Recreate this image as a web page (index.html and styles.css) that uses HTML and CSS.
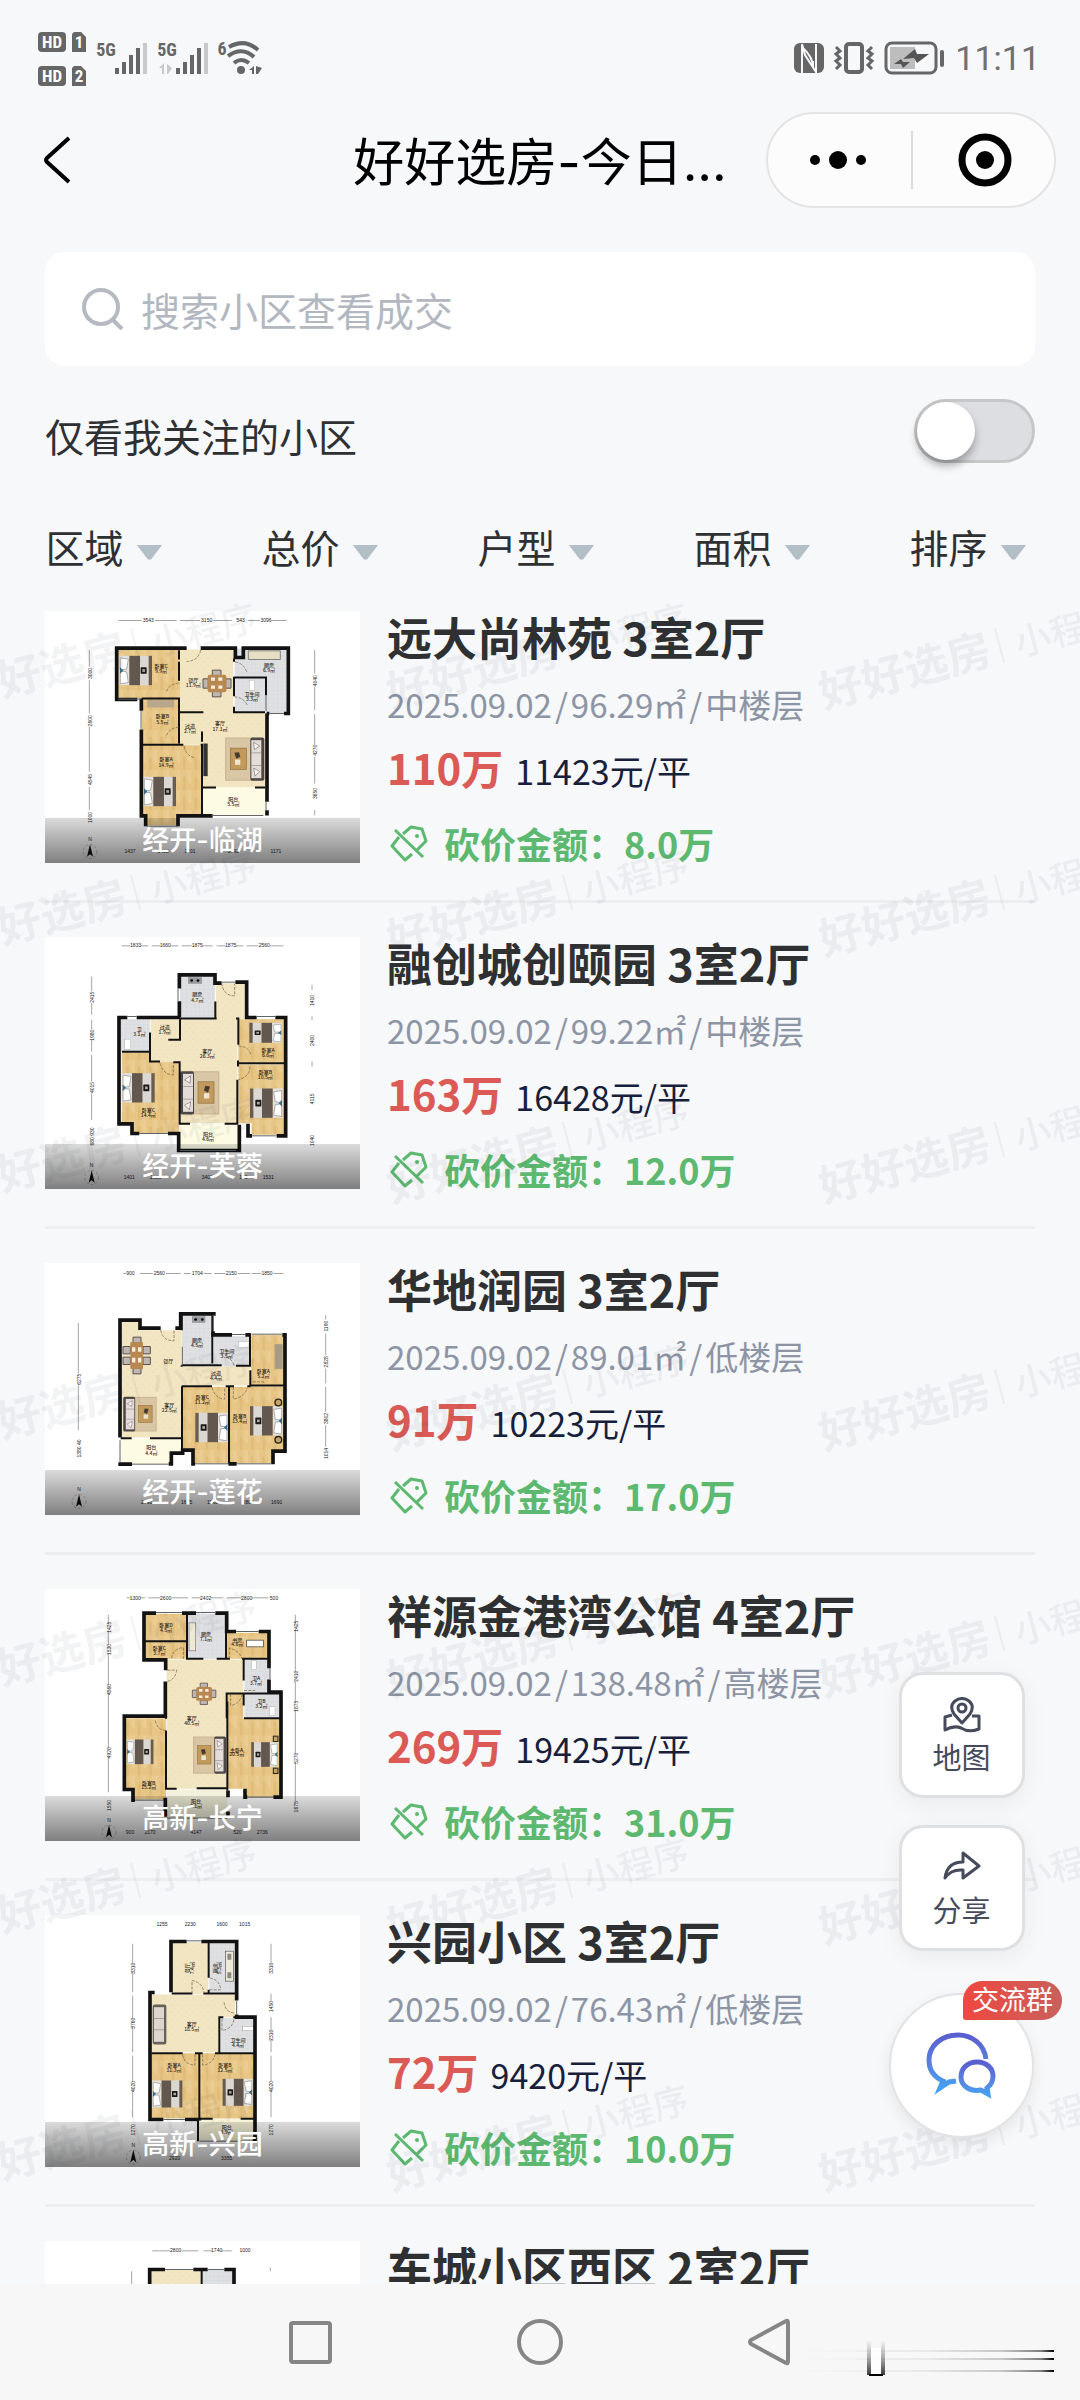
FILE: index.html
```html
<!DOCTYPE html>
<html lang="zh-CN">
<head>
<meta charset="utf-8">
<meta name="viewport" content="width=device-width, initial-scale=1">
<title>好好选房-今日成交</title>
<link rel="stylesheet" href="styles.css">
</head>
<body>
<!-- shared artwork for icons and floor plans -->
<svg class="defs" width="0" height="0" aria-hidden="true">
  <defs>
    <pattern id="wood" width="34" height="60" patternUnits="userSpaceOnUse">
      <rect width="34" height="60" fill="#e6c585"/>
      <rect x="0" width="9" height="38" fill="#ebcd93"/><rect x="17" y="20" width="8" height="40" fill="#e0bc78"/>
      <rect x="26" y="0" width="8" height="30" fill="#e9ca8e"/>
    </pattern>
    <pattern id="stone" width="22" height="22" patternUnits="userSpaceOnUse">
      <rect width="22" height="22" fill="#f2e5c2"/><path d="M4 6h5M14 16h4" stroke="#eddcb2" stroke-width="3"/>
    </pattern>
    <pattern id="tile" width="13" height="13" patternUnits="userSpaceOnUse">
      <rect width="13" height="13" fill="#dfe0e2"/><path d="M0 0H13M0 0V13" stroke="#d6d7da" stroke-width="2"/>
    </pattern>
    <g id="bed">
      <rect width="30" height="88" fill="#e4e3e0"/><path d="M3 6L27 10L22 40L3 42ZM3 46L22 48L27 80L3 84Z" fill="#fff" stroke="#8b8a88" stroke-width="2"/>
      <path d="M2 34L12 44L2 54" fill="#3b6b86"/>
      <rect x="30" width="32" height="88" fill="#62584f"/><rect x="62" width="28" height="88" fill="#dbd7d3"/><rect x="88" width="10" height="88" fill="#6b5c50"/>
      <rect x="64" y="34" width="18" height="20" rx="2" fill="#1c1a19"/><rect x="69" y="40" width="8" height="8" fill="#b3aca6"/>
    </g>
    <g id="lounge">
      <rect width="88" height="130" fill="#cdb893"/><rect x="4" y="4" width="80" height="122" fill="#d8c6a5"/>
      <rect x="16" y="32" width="48" height="64" fill="#c19a5c" stroke="#8d6d3c" stroke-width="2"/>
      <path d="M28 46L42 44L46 58L34 64Z" fill="#443a33"/><rect x="30" y="66" width="16" height="16" fill="#eee4d2"/>
      <rect x="76" y="0" width="42" height="130" rx="6" fill="#4e4844"/><rect x="79" y="8" width="30" height="114" fill="#e4dcd8"/>
      <path d="M79 46H108M79 84H108" stroke="#8f8682" stroke-width="2"/><path d="M86 14L104 26L88 36ZM86 92L104 102L90 116Z" fill="#f8f5f3" stroke="#7a6f6b" stroke-width="2"/>
    </g>
    <g id="dining">
      <path d="M28 0H54V16H28ZM28 64H54V80H28ZM0 26H16V54H0ZM68 26H84V54H68Z" fill="#bdb6b1" stroke="#5d534c" stroke-width="3"/>
      <rect x="14" y="14" width="56" height="52" rx="6" fill="#b98750"/><path d="M24 22h12v10h-12zM46 22h12v10h-12zM24 46h12v10h-12zM46 46h12v10h-12z" fill="#f5eddf"/>
    </g>
    <g id="dining-long">
      <path d="M30 0H54V18H30ZM30 92H54V110H30ZM0 28H22V50H0ZM0 60H22V82H0ZM60 28H82V50H60ZM60 60H82V82H60Z" fill="#bdb6b1" stroke="#5d534c" stroke-width="3"/>
      <rect x="22" y="15" width="38" height="80" fill="#b98750"/><path d="M27 30h10v14h-10zM45 30h10v14h-10zM27 62h10v14h-10zM45 62h10v14h-10z" fill="#f5eddf"/>
    </g>
    <g id="north">
      <circle r="21" fill="none" stroke="#555" stroke-width="1" stroke-dasharray="8 6"/>
      <path d="M0 -22L9 16L0 8L-9 16Z" fill="#111"/><text class="dim" x="0" y="-32">N</text>
    </g>
    <symbol id="cut-tag" viewBox="0 0 38 37">
      <g fill="none" stroke="currentColor" stroke-width="3" stroke-linejoin="round">
        <path d="M13 9L21 2L32 4L36 16L27 25"/><path d="M9 12L2 21L15 35L22 29"/><path d="M5 5L33 32"/>
      </g>
      <circle cx="27" cy="11" r="2" fill="currentColor"/>
    </symbol>
    <linearGradient id="chat-fill" x1="0" y1="0" x2="0" y2="1">
      <stop offset="0" stop-color="#5a5fd0"/><stop offset=".6" stop-color="#5b84dc"/><stop offset="1" stop-color="#45a0f4"/>
    </linearGradient>
    <linearGradient id="fade-x"><stop offset="0" stop-color="#000" stop-opacity="0"/><stop offset=".5" stop-color="#000" stop-opacity=".06"/><stop offset=".8" stop-color="#000" stop-opacity=".2"/><stop offset=".95" stop-color="#000" stop-opacity=".5"/><stop offset="1" stop-color="#000"/></linearGradient>
    <linearGradient id="fade-y" x2="0" y2="1"><stop offset="0" stop-color="#000" stop-opacity="0"/><stop offset=".5" stop-color="#000" stop-opacity=".3"/><stop offset="1" stop-color="#000" stop-opacity=".75"/></linearGradient>
  </defs>
</svg>

<div class="app">
  <div class="status">
    <svg class="status-left" width="226" height="56" viewBox="0 0 226 56" role="img" aria-label="信号与网络">
      <g fill="#666">
        <rect x="0" y="2" width="28" height="20" rx="4"/><rect x="0" y="36" width="28" height="20" rx="4"/>
        <path d="M36 2H43L48 7V22H34V4ZM36 36H43L48 41V56H34V38Z"/>
        <rect x="77" y="38" width="4" height="6"/><rect x="84" y="32" width="4" height="12"/><rect x="91" y="25" width="4" height="19"/><rect x="98" y="18" width="4" height="26"/>
        <rect x="138" y="38" width="4" height="6"/><rect x="145" y="32" width="4" height="12"/><rect x="152" y="25" width="4" height="19"/><rect x="159" y="18" width="4" height="26"/>
        <circle cx="203" cy="40" r="4"/>
        <path d="M211 40L216 36V44H214V40ZM218 36L224 38L220 44H218Z"/>
      </g>
      <g fill="#c9c9ca"><rect x="105" y="13" width="4" height="31"/><rect x="166" y="13" width="4" height="31"/><path d="M121 38L126 33V44H124V38ZM129 34L134 38L130 44H129Z"/></g>
      <g fill="none" stroke="#666" stroke-width="4"><path d="M191 17Q207 8 220 20"/><path d="M190 26Q204 16 216 27"/><path d="M196 33Q203 27 211 33"/></g>
      <g class="status-mini">
        <text class="status-badge" x="14" y="18">HD</text><text class="status-badge" x="14" y="52">HD</text>
        <text class="status-badge" x="41" y="18">1</text><text class="status-badge" x="41" y="52">2</text>
        <text x="68" y="26">5G</text><text x="129" y="26">5G</text><text x="184" y="25">6</text>
      </g>
    </svg>
    <div class="status-right">
      <svg width="152" height="34" viewBox="0 0 152 34" role="img" aria-label="NFC 振动 充电">
        <rect x="1" y="2" width="30" height="30" rx="6" fill="#666"/>
        <path d="M9 32V6Q20 16 20 26V20M9 3L12 14L23 31V3" fill="none" stroke="#f7f8fa" stroke-width="2"/>
        <rect x="53" y="3" width="16" height="28" rx="3" fill="none" stroke="#666" stroke-width="4"/>
        <path d="M43 6L47 10L43 13L47 17L43 20L47 24L43 28M79 6L75 10L79 13L75 17L79 20L75 24L79 28" fill="none" stroke="#666" stroke-width="3"/>
        <rect x="93" y="2" width="50" height="30" rx="6" fill="none" stroke="#666" stroke-width="3"/>
        <rect x="97" y="6" width="25" height="22" fill="#bdbdbe"/>
        <path d="M110 18L122 8L124 13H136L124 22L121 17ZM101 23L108 18L110 21H117L110 27L108 23Z" fill="#555"/>
        <rect x="147" y="9" width="4" height="17" rx="2" fill="#666"/>
      </svg>
      <time class="clock">11:11</time>
    </div>
  </div>

  <header class="titlebar">
    <button class="back" aria-label="返回">
      <svg width="28" height="48" viewBox="0 0 28 48"><path d="M25 2L3 22Q1 24 3 26L25 46" fill="none" stroke="#000" stroke-width="4"/></svg>
    </button>
    <h1 class="page-title">好好选房-今日...</h1>
    <div class="capsule">
      <button class="capsule-btn capsule-more" aria-label="更多">
        <svg width="58" height="20" viewBox="0 0 58 20"><circle cx="6" cy="10" r="5"/><circle cx="29" cy="10" r="9"/><circle cx="52" cy="10" r="5"/></svg>
      </button>
      <button class="capsule-btn capsule-close" aria-label="关闭">
        <svg width="54" height="54" viewBox="0 0 54 54"><circle cx="27" cy="27" r="23" fill="none" stroke="#000" stroke-width="7"/><circle cx="27" cy="27" r="9"/></svg>
      </button>
    </div>
  </header>

  <label class="search">
    <svg width="42" height="42" viewBox="0 0 42 42" aria-hidden="true"><circle cx="19" cy="19" r="17" fill="none" stroke="#b5b9c1" stroke-width="4"/><path d="M30 31L40 41" stroke="#b5b9c1" stroke-width="4"/></svg>
    <input type="search" placeholder="搜索小区查看成交" aria-label="搜索小区查看成交">
  </label>

  <div class="follow">
    <label for="only-followed">仅看我关注的小区</label>
    <input class="switch" id="only-followed" type="checkbox" role="switch">
  </div>

  <nav class="filters" aria-label="筛选">
    <button aria-haspopup="listbox">区域</button>
    <button aria-haspopup="listbox">总价</button>
    <button aria-haspopup="listbox">户型</button>
    <button aria-haspopup="listbox">面积</button>
    <button aria-haspopup="listbox">排序</button>
  </nav>

  <main class="results">
    <ul class="list">
      <li class="item">
        <figure class="plan">
          <svg viewBox="45 63 945 755" aria-hidden="true">
            <rect x="260" y="175" width="190" height="150" fill="url(#wood)"/><rect x="335" y="325" width="112" height="140" fill="url(#wood)"/><path d="M335 465H515V675H445V705H345V675H335Z" fill="url(#wood)"/>
            <rect x="450" y="178" width="160" height="190" fill="url(#stone)"/><rect x="450" y="366" width="255" height="98" fill="url(#stone)"/><rect x="517" y="450" width="190" height="142" fill="url(#stone)"/>
            <path d="M614 175H775V370H705V365H614Z" fill="url(#tile)"/><rect x="518" y="592" width="190" height="84" fill="#fdfbe4"/>
            <use href="#bed" x="268" y="197"/><use href="#bed" x="340" y="560"/><use href="#dining" x="519" y="240"/><use href="#lounge" x="585" y="442"/>
            <rect x="520" y="460" width="13" height="98" fill="#333"/><rect x="352" y="328" width="80" height="24" fill="#b8a78b"/><path d="M655 182h96v26h-96z" fill="#e6dfc6" stroke="#555" stroke-width="2"/><rect x="658" y="270" width="16" height="30" fill="#fff" stroke="#999"/>
            <path class="wall" d="M470 174H260V328H322M334 325V362M334 418V677H352M347 672V708M444 708V677H548M512 174H616V202H640V174H775V370H762M711 370V635M711 660V676M718 370H710"/>
            <path class="wall thin" d="M447 180V208M447 215V272M447 325V460M335 325H450M335 464H460M512 464H516V590M516 455V424M447 366H520M612 205V215M612 260V262H708V315M612 265V318M612 350V366H705M518 592H558M675 592H706M516 590V675"/>
            <path class="window" d="M265 327H332M333 362V416M350 708H444M545 676H700M708 315V362M718 370H762M708 635V662"/>
            <path class="door" d="M512 180Q505 212 470 214M447 278Q412 285 410 305M650 245Q640 218 614 215M447 410Q412 416 408 442M462 468Q470 500 495 502M652 345Q640 322 614 320"/>
            <path class="ruler" d="M265 91H335M375 91H440M450 91H510M550 91H605M655 91H690M725 91H770M178 180V230M178 270V370M178 410V545M178 590V660M854 180V250M854 290V360M854 372V465M854 500V580M854 660V675"/>
            <text class="dim" x="355" y="96">3543</text><text class="dim" x="530" y="96">3150</text><text class="dim" x="708" y="96">3096</text><text class="dim" x="632" y="96">543</text>
            <text class="dim" x="300" y="790">1437</text><text class="dim" x="400" y="790">3420</text><text class="dim" x="480" y="790">1201</text><text class="dim" x="610" y="790">3093</text><text class="dim" x="738" y="790">1171</text>
            <g class="dims-v"><text transform="translate(186 250)rotate(-90)">3000</text><text transform="translate(186 392)rotate(-90)">2600</text><text transform="translate(186 568)rotate(-90)">4545</text><text transform="translate(186 682)rotate(-90)">1000</text><text transform="translate(861 272)rotate(-90)">4040</text><text transform="translate(861 480)rotate(-90)">4270</text><text transform="translate(861 610)rotate(-90)">3650</text></g>
            <text class="room" x="393" y="234">卧室C</text><text class="room" x="393" y="250">9.9㎡</text><text class="room" x="490" y="275">餐厅</text><text class="room" x="490" y="292">11.9㎡</text><text class="room" x="717" y="231">厨房</text><text class="room" x="717" y="247">6.9㎡</text><text class="room" x="666" y="318">卫生间</text><text class="room" x="666" y="334">3.3㎡</text><text class="room" x="397" y="385">卧室B</text><text class="room" x="397" y="401">5.5㎡</text><text class="room" x="480" y="413">过道</text><text class="room" x="480" y="428">2.7㎡</text><text class="room" x="570" y="406">客厅</text><text class="room" x="570" y="423">17.1㎡</text><text class="room" x="408" y="514">卧室A</text><text class="room" x="408" y="530">14.9㎡</text><text class="room" x="610" y="632">阳台</text><text class="room" x="610" y="648">5.5㎡</text>
            <use href="#north" x="180" y="784"/>
          </svg>
          <figcaption>经开-临湖</figcaption>
        </figure>
        <div class="info">
          <h2>远大尚林苑 3室2厅</h2>
          <p class="meta"><span>2025.09.02</span><i>/</i><span>96.29㎡</span><i>/</i><span>中楼层</span></p>
          <p class="price"><strong>110万</strong><span>11423元/平</span></p>
          <p class="cut"><svg width="38" height="37"><use href="#cut-tag"/></svg><span>砍价金额：8.0万</span></p>
        </div>
      </li>

      <li class="item">
        <figure class="plan">
          <svg viewBox="45 52 945 755" aria-hidden="true">
            <path d="M275 398H360V425H447V640H305V608H275Z" fill="url(#wood)"/><rect x="625" y="298" width="140" height="130" fill="url(#wood)"/><path d="M625 434H765V645H665V610H625Z" fill="url(#wood)"/>
            <path d="M362 298H558V190H645V298H622V610H450V424H362Z" fill="url(#stone)"/><rect x="450" y="168" width="105" height="126" fill="url(#tile)"/><rect x="272" y="298" width="88" height="98" fill="url(#tile)"/><rect x="448" y="612" width="178" height="80" fill="#fdfbe4"/>
            <use href="#bed" x="276" y="460"/><use href="#bed" transform="translate(758 506)scale(-1 1)"/><use href="#bed" transform="translate(756 309)scale(-1 .68)"/><use href="#lounge" transform="translate(568 454)scale(-1 1)"/>
            <rect x="474" y="172" width="42" height="20" fill="#999b9e"/><circle cx="485" cy="182" r="4"/><circle cx="504" cy="182" r="4"/><rect x="284" y="358" width="18" height="30" fill="#fff" stroke="#999"/>
            <path class="wall" d="M448 206V165H555V190H575M448 244V293M616 187H650V293H680M736 293H767V648H740M666 648H654V612M292 293H267V612H306V641H328M320 293H450M414 641H446V692H628V615"/>
            <path class="wall thin" d="M450 296H556V245M558 296H560M618 296H625V375M622 430H766M624 422V440M622 480V612H584M450 298V360H415M360 338V425H390M276 396H360M430 427H449V612H480"/>
            <path class="window" d="M444 206V244M575 187H616M680 290H736M290 290H320M328 641H414M666 648H740M450 692H618"/>
            <path class="door" d="M575 190Q580 228 614 228V192M625 378Q660 382 662 405M660 440Q660 470 625 480M390 430Q400 465 430 465V430"/>
            <path class="ruler" d="M275 78H300M332 78H355M365 78H390M422 78H445M455 78H485M518 78H548M560 78H585M618 78H640M650 78H685M720 78H760M185 170V215M185 250V285M185 300V330M185 360V395M185 405V485M185 520V600M846 195V210M846 290V300M846 425V440"/>
            <text class="dim" x="317" y="83">1833</text><text class="dim" x="406" y="83">1660</text><text class="dim" x="502" y="83">1875</text><text class="dim" x="602" y="83">1875</text><text class="dim" x="703" y="83">2560</text>
            <text class="dim" x="298" y="778">1401</text><text class="dim" x="377" y="778">2620</text><text class="dim" x="532" y="778">3401</text><text class="dim" x="640" y="778">120</text><text class="dim" x="715" y="778">1531</text>
            <g class="dims-v"><text transform="translate(192 232)rotate(-90)">2415</text><text transform="translate(192 346)rotate(-90)">1980</text><text transform="translate(192 503)rotate(-90)">4015</text><text transform="translate(192 650)rotate(-90)">680 930</text><text transform="translate(853 242)rotate(-90)">1410</text><text transform="translate(853 362)rotate(-90)">2400</text><text transform="translate(853 537)rotate(-90)">4115</text><text transform="translate(853 662)rotate(-90)">1040</text></g>
            <text class="room" x="502" y="230">厨房</text><text class="room" x="502" y="246">4.7㎡</text><text class="room" x="328" y="334">卫</text><text class="room" x="328" y="350">3.1㎡</text><text class="room" x="404" y="328">过道</text><text class="room" x="404" y="344">1.9㎡</text><text class="room" x="532" y="399">客厅</text><text class="room" x="532" y="415">26.3㎡</text><text class="room" x="714" y="396">卧室A</text><text class="room" x="714" y="412">6.6㎡</text><text class="room" x="706" y="462">卧室B</text><text class="room" x="706" y="478">10.5㎡</text><text class="room" x="355" y="577">卧室C</text><text class="room" x="355" y="593">14.4㎡</text><text class="room" x="534" y="649">阳台</text><text class="room" x="534" y="665">4.6㎡</text>
            <use href="#north" x="185" y="773"/>
          </svg>
          <figcaption>经开-芙蓉</figcaption>
        </figure>
        <div class="info">
          <h2>融创城创颐园 3室2厅</h2>
          <p class="meta"><span>2025.09.02</span><i>/</i><span>99.22㎡</span><i>/</i><span>中楼层</span></p>
          <p class="price"><strong>163万</strong><span>16428元/平</span></p>
          <p class="cut"><svg width="38" height="37"><use href="#cut-tag"/></svg><span>砍价金额：12.0万</span></p>
        </div>
      </li>

      <li class="item">
        <figure class="plan">
          <svg viewBox="45 39 945 755" aria-hidden="true">
            <path d="M456 410H765V602H730V640H490V602H456Z" fill="url(#wood)"/><rect x="664" y="254" width="98" height="152" fill="url(#wood)"/>
            <path d="M275 214H328V240H455V348H660V406H455V562H275Z" fill="url(#stone)"/><rect x="456" y="195" width="92" height="150" fill="url(#tile)"/><rect x="552" y="258" width="108" height="90" fill="url(#tile)"/><path d="M272 566H456V608H420V642H272Z" fill="#fdfbe4"/>
            <use href="#dining-long" x="279" y="261"/><use href="#lounge" transform="translate(380 440)scale(-.85 .8)"/><use href="#bed" transform="translate(594 488)scale(-1 1)"/><use href="#bed" transform="translate(758 468)scale(-1 1)"/>
            <rect x="734" y="282" width="24" height="74" fill="#a89b85"/><rect x="486" y="198" width="40" height="20" fill="#999b9e"/><circle cx="497" cy="208" r="4"/><circle cx="517" cy="208" r="4"/><rect x="625" y="274" width="32" height="18" fill="#fff" stroke="#999"/>
            <circle cx="745" cy="457" r="10" fill="#c8a263" stroke="#222" stroke-width="4"/><circle cx="745" cy="569" r="10" fill="#c8a263" stroke="#222" stroke-width="4"/>
            <path class="wall" d="M392 234H330V210H270V562M436 234H452V191H557M549 243V254H606M646 254H662M757 254H765V603H729V642M620 641H595M495 641H489V600H458V609H424V641H416M306 642H265"/>
            <path class="wall thin" d="M455 195V240M455 345H575M547 195V340M618 347H660V250M661 360V406H765M455 350V345M455 408H546M587 408H612M652 408H662M456 408V605M597 410V640M272 564H305M360 564H455"/>
            <path class="window" d="M270 570V638M306 642H416M495 641H595M620 641H724M606 253H646M665 252H758M550 195V243M457 290V345"/>
            <path class="door" d="M392 240Q398 272 432 272V240M546 412Q555 445 584 447V412M610 410V447Q645 440 652 412M612 345Q605 325 590 322M668 395H700V400"/>
            <path class="ruler" d="M280 70H288M330 70H368M408 70H452M462 70H482M522 70H545M552 70H586M624 70H660M665 70H693M730 70H760M145 218V370M145 405V540M887 195V208M887 250V315M887 355V400M887 410V485M887 525V590"/>
            <text class="dim" x="301" y="75">900</text><text class="dim" x="388" y="75">2560</text><text class="dim" x="502" y="75">1704</text><text class="dim" x="604" y="75">2150</text><text class="dim" x="711" y="75">1850</text>
            <text class="dim" x="350" y="763">2790</text><text class="dim" x="470" y="763">1675</text><text class="dim" x="548" y="763">1500</text><text class="dim" x="655" y="763">2800</text><text class="dim" x="740" y="763">1691</text>
            <g class="dims-v"><text transform="translate(152 387)rotate(-90)">6275</text><text transform="translate(152 595)rotate(-90)">1380 40</text><text transform="translate(894 228)rotate(-90)">1190</text><text transform="translate(894 335)rotate(-90)">2828</text><text transform="translate(894 505)rotate(-90)">3802</text><text transform="translate(894 610)rotate(-90)">1014</text></g>
            <text class="room" x="415" y="338">餐厅</text><text class="room" x="501" y="276">厨房</text><text class="room" x="501" y="292">4.5㎡</text><text class="room" x="590" y="308">卫生间</text><text class="room" x="590" y="323">3.5㎡</text><text class="room" x="558" y="376">过道</text><text class="room" x="558" y="391">4.4㎡</text><text class="room" x="700" y="368">卧室A</text><text class="room" x="700" y="384">5.2㎡</text><text class="room" x="418" y="470">客厅</text><text class="room" x="418" y="486">22.5㎡</text><text class="room" x="517" y="447">卧室C</text><text class="room" x="517" y="463">11.2㎡</text><text class="room" x="629" y="504">卧室B</text><text class="room" x="629" y="520">13.4㎡</text><text class="room" x="364" y="598">阳台</text><text class="room" x="364" y="614">4.4㎡</text>
            <use href="#north" x="147" y="754"/>
          </svg>
          <figcaption>经开-莲花</figcaption>
        </figure>
        <div class="info">
          <h2>华地润园 3室2厅</h2>
          <p class="meta"><span>2025.09.02</span><i>/</i><span>89.01㎡</span><i>/</i><span>低楼层</span></p>
          <p class="price"><strong>91万</strong><span>10223元/平</span></p>
          <p class="cut"><svg width="38" height="37"><use href="#cut-tag"/></svg><span>砍价金额：17.0万</span></p>
        </div>
      </li>

      <li class="item">
        <figure class="plan">
          <svg viewBox="45 41 945 755" aria-hidden="true">
            <rect x="342" y="115" width="128" height="135" fill="url(#wood)"/><rect x="590" y="172" width="124" height="78" fill="url(#wood)"/><path d="M285 428H408V672H310V640H285Z" fill="url(#wood)"/><path d="M592 355H640V428H752V665H645V640H592Z" fill="url(#wood)"/>
            <path d="M410 252H640V355H590V640H410Z" fill="url(#stone)"/><rect x="473" y="115" width="115" height="135" fill="url(#tile)"/><rect x="643" y="252" width="76" height="102" fill="url(#tile)"/><rect x="643" y="356" width="106" height="70" fill="url(#tile)"/><rect x="410" y="642" width="182" height="86" fill="#f3f1dc"/>
            <use href="#bed" transform="translate(290 492)scale(.82 .84)"/><use href="#bed" transform="translate(744 500)scale(-.82 .84)"/><use href="#dining" transform="translate(487 323)scale(.84 .8)"/><use href="#lounge" transform="translate(489 483)scale(.84 .86)"/>
            <rect x="477" y="142" width="20" height="84" fill="#efead6" stroke="#777" stroke-width="2"/><rect x="650" y="194" width="50" height="20" fill="#fff" stroke="#333" stroke-width="2"/><rect x="665" y="256" width="14" height="26" fill="#fff" stroke="#999"/><rect x="719" y="394" width="16" height="26" fill="#fff" stroke="#999"/>
            <rect x="730" y="482" width="14" height="16" fill="#c8a263" stroke="#222" stroke-width="3"/><rect x="730" y="578" width="14" height="16" fill="#c8a263" stroke="#222" stroke-width="3"/>
            <path class="wall" d="M378 113H342V253H407V284M472 113H498M456 113H472M556 113H590V168H618M686 168H717V278M717 312V350H753V665H730M406 318V422H283V642H309V674H315M400 672H406V724M594 665V645M594 724V708M652 665H645V640"/>
            <path class="wall thin" d="M471 115V250H520M342 197H470M560 250H600M588 115V250M636 250H720M641 252V315M590 428V354H752M641 354V390M642 428H750M592 378V645M408 465V640H440M500 638H594M408 424V430"/>
            <path class="window" d="M378 111H456M498 111H556M618 168H686M720 278V312M315 674H400M652 665H730M410 728H592"/>
            <path class="door" d="M412 284H440Q436 312 412 318M376 435Q380 462 406 465M425 248Q428 220 460 216V250M598 250V218Q628 225 636 250M602 355V390Q630 385 636 358M642 345H675"/>
            <path class="ruler" d="M290 67H302M330 67H345M355 67H392M424 67H475M485 67H512M542 67H580M590 67H635M666 67H715M235 118V145M235 165V210M235 235V330M235 352V520M235 545V650M796 118V145M796 160V290M796 315V380M796 402V535M796 560V680"/>
            <text class="dim" x="316" y="72">1300</text><text class="dim" x="407" y="72">2600</text><text class="dim" x="527" y="72">2402</text><text class="dim" x="650" y="72">2800</text><text class="dim" x="732" y="72">500</text>
            <text class="dim" x="300" y="775">900</text><text class="dim" x="360" y="775">2170</text><text class="dim" x="498" y="775">4147</text><text class="dim" x="622" y="775">520</text><text class="dim" x="697" y="775">2736</text>
            <g class="dims-v"><text transform="translate(242 155)rotate(-90)">1425</text><text transform="translate(242 222)rotate(-90)">1530</text><text transform="translate(242 342)rotate(-90)">4560</text><text transform="translate(242 532)rotate(-90)">4920</text><text transform="translate(242 690)rotate(-90)">1550</text><text transform="translate(803 152)rotate(-90)">1425</text><text transform="translate(803 302)rotate(-90)">2410</text><text transform="translate(803 392)rotate(-90)">1875</text><text transform="translate(803 548)rotate(-90)">5270</text><text transform="translate(803 694)rotate(-90)">1675</text></g>
            <text class="room" x="408" y="155">卧室D</text><text class="room" x="408" y="168">4.5㎡</text><text class="room" x="388" y="223">卧室C</text><text class="room" x="388" y="238">3.7㎡</text><text class="room" x="528" y="182">厨房</text><text class="room" x="528" y="197">7.1㎡</text><text class="room" x="622" y="198">书房</text><text class="room" x="622" y="212">4.6㎡</text><text class="room" x="678" y="314">卫A</text><text class="room" x="678" y="328">3.7㎡</text><text class="room" x="694" y="382">卫B</text><text class="room" x="694" y="396">3.2㎡</text><text class="room" x="485" y="434">客厅</text><text class="room" x="485" y="448">40.5㎡</text><text class="room" x="620" y="528">主卧A</text><text class="room" x="620" y="542">20.5㎡</text><text class="room" x="356" y="627">卧室B</text><text class="room" x="356" y="641">15.2㎡</text><text class="room" x="498" y="682">阳台</text><text class="room" x="498" y="696">7.1㎡</text>
            <use href="#north" x="237" y="770"/>
          </svg>
          <figcaption>高新-长宁</figcaption>
        </figure>
        <div class="info">
          <h2>祥源金港湾公馆 4室2厅</h2>
          <p class="meta"><span>2025.09.02</span><i>/</i><span>138.48㎡</span><i>/</i><span>高楼层</span></p>
          <p class="price"><strong>269万</strong><span>19425元/平</span></p>
          <p class="cut"><svg width="38" height="37"><use href="#cut-tag"/></svg><span>砍价金额：31.0万</span></p>
        </div>
      </li>

      <li class="item">
        <figure class="plan">
          <svg viewBox="45 44 945 755" aria-hidden="true">
            <rect x="365" y="458" width="305" height="196" fill="url(#wood)"/><rect x="425" y="125" width="110" height="155" fill="url(#stone)"/><path d="M365 282H615V350H568V455H365Z" fill="url(#stone)"/>
            <rect x="538" y="125" width="78" height="152" fill="url(#tile)"/><rect x="572" y="352" width="98" height="102" fill="url(#tile)"/><rect x="508" y="656" width="165" height="64" fill="#f7f4d8"/>
            <use href="#bed" transform="translate(367 540)scale(.92 .92)"/><use href="#bed" transform="translate(668 535)scale(-.92 .92)"/>
            <rect x="368" y="312" width="41" height="120" rx="6" fill="#6b615b"/><rect x="372" y="320" width="30" height="104" fill="#ddd5d0"/><path d="M372 354H402M372 388H402" stroke="#8f8682" stroke-width="2"/><rect x="586" y="152" width="24" height="90" fill="#eeead8" stroke="#555" stroke-width="2"/><path d="M592 160h12v18h-12zM592 215h12v18h-12z" fill="#8b8a84"/><rect x="638" y="377" width="32" height="14" fill="#fff" stroke="#777"/>
            <path class="wall" d="M470 123H423V275M514 123H620V300M620 342V350H675V724M374 276H360V657H400M465 657H508V660M400 657H360M675 720H668"/>
            <path class="wall thin" d="M425 279H487M520 279H618M536 125V232M536 268V280M568 455V350H580M610 350H620M365 458H458M495 458H518M555 458H672M508 458V655M508 655H548M632 655H672M504 660V722"/>
            <path class="window" d="M470 121H514M620 300V342M400 657H465M508 722H668"/>
            <path class="door" d="M486 280V240Q516 245 522 275M538 268H572Q570 238 538 232M582 305Q585 335 615 338M576 355V390Q608 385 612 355M458 462Q462 492 495 494V462M518 462V494Q550 490 555 462"/>
            <path class="ruler" d="M308 130V190M308 215V275M308 285V355M308 378V455M308 465V545M308 570V650M723 130V190M723 280V305M723 350V392M723 415V455M723 465V545M723 570V650"/>
            <text class="dim" x="396" y="77">1255</text><text class="dim" x="481" y="77">2230</text><text class="dim" x="576" y="77">1600</text><text class="dim" x="644" y="77">1015</text><text class="dim" x="434" y="777">2920</text><text class="dim" x="590" y="777">3355</text>
            <g class="dims-v"><text transform="translate(315 203)rotate(-90)">3310</text><text transform="translate(315 368)rotate(-90)">3760</text><text transform="translate(315 558)rotate(-90)">4020</text><text transform="translate(315 688)rotate(-90)">1270</text><text transform="translate(730 203)rotate(-90)">3310</text><text transform="translate(730 318)rotate(-90)">1450</text><text transform="translate(730 404)rotate(-90)">2310</text><text transform="translate(730 558)rotate(-90)">4020</text><text transform="translate(730 688)rotate(-90)">1270</text></g>
            <text class="room" transform="translate(478 203)rotate(-90)">餐厅</text><text class="room" transform="translate(492 203)rotate(-90)">7.4㎡</text><text class="room" transform="translate(560 203)rotate(-90)">厨房</text><text class="room" transform="translate(574 203)rotate(-90)">5.3㎡</text><text class="room" x="485" y="377">客厅</text><text class="room" x="485" y="391">18.5㎡</text><text class="room" x="624" y="424">卫生间</text><text class="room" x="624" y="439">4.4㎡</text><text class="room" x="432" y="500">卧室A</text><text class="room" x="432" y="515">11.3㎡</text><text class="room" x="585" y="500">卧室B</text><text class="room" x="585" y="515">12.5㎡</text><text class="room" x="590" y="686">阳台</text><text class="room" x="590" y="700">3.9㎡</text>
            <use href="#north" x="310" y="770"/>
          </svg>
          <figcaption>高新-兴园</figcaption>
        </figure>
        <div class="info">
          <h2>兴园小区 3室2厅</h2>
          <p class="meta"><span>2025.09.02</span><i>/</i><span>76.43㎡</span><i>/</i><span>低楼层</span></p>
          <p class="price"><strong>72万</strong><span>9420元/平</span></p>
          <p class="cut"><svg width="38" height="37"><use href="#cut-tag"/></svg><span>砍价金额：10.0万</span></p>
        </div>
      </li>

      <li class="item">
        <figure class="plan">
          <svg viewBox="0 0 945 755" aria-hidden="true">
            <rect x="315" y="85" width="155" height="300" fill="url(#stone)"/><rect x="472" y="85" width="98" height="300" fill="url(#tile)"/>
            <path class="wall" d="M314 385V85H360M445 85H488M538 85H567V385"/><path class="wall thin" d="M470 85V385"/><path class="window" d="M360 85H445M488 85H538"/>
            <path class="ruler" d="M322 29H375M410 29H460M475 29H500M530 29H560M260 90V385M676 80V90"/>
            <text class="dim" x="392" y="34">2800</text><text class="dim" x="515" y="34">1740</text><text class="dim" x="600" y="34">1000</text>
          </svg>
        </figure>
        <div class="info">
          <h2>车城小区西区 2室2厅</h2>
        </div>
      </li>
    </ul>
    <svg class="watermark" aria-hidden="true">
      <defs>
        <pattern id="mark" x="380" y="0" width="432" height="247" patternUnits="userSpaceOnUse">
          <g transform="translate(12 114) rotate(-15)">
            <text class="mark-strong" x="0" y="0">好好选房</text><path d="M186 -34V2" stroke="#1f2d3d" stroke-width="2"/><text class="mark-light" x="202" y="0">小程序</text>
          </g>
        </pattern>
      </defs>
      <rect width="100%" height="100%" fill="url(#mark)"/>
    </svg>
  </main>

  <nav class="sysbar" aria-label="系统导航">
    <button aria-label="最近任务"><svg width="50" height="50" viewBox="0 0 50 50"><rect x="6" y="6" width="39" height="39" rx="2"/></svg></button>
    <button aria-label="主屏幕"><svg width="50" height="50" viewBox="0 0 50 50"><circle cx="25" cy="25" r="21"/></svg></button>
    <button aria-label="返回上级"><svg width="50" height="50" viewBox="0 0 50 50"><path d="M41 4Q43 3 43 6V44Q43 47 41 46L6 27Q4 25 6 23Z"/></svg></button>
    <svg class="trace" width="260" height="40" viewBox="0 0 260 40" aria-hidden="true">
      <rect y="10" width="256" height="2" fill="url(#fade-x)"/><rect y="18" width="256" height="2" fill="url(#fade-x)"/><rect y="30" width="256" height="2" fill="url(#fade-x)"/>
      <rect x="69" width="4" height="35" fill="url(#fade-y)"/><rect x="83" width="4" height="35" fill="url(#fade-y)"/><rect x="73" y="8" width="10" height="26" fill="#fff" opacity=".8"/><path d="M71 35H85" stroke="#000" stroke-width="2"/>
    </svg>
  </nav>

  <aside class="floats">
    <button class="float-card">
      <svg width="38" height="36" viewBox="0 0 38 36" aria-hidden="true"><g fill="none" stroke="#454b5b" stroke-width="3" stroke-linejoin="round"><path d="M19 26L11 17Q6 9 12 4Q19 -1 26 4Q32 9 27 17Z"/><circle cx="19" cy="11" r="4"/><path d="M9 18L2 20V33Q11 28 18 31Q26 36 36 32V19H29"/></g></svg>
      <span>地图</span>
    </button>
    <button class="float-card">
      <svg width="38" height="36" viewBox="0 0 38 36" aria-hidden="true"><path d="M2 28Q4 12 20 12V3L36 16L20 28V20Q8 19 2 28Z" fill="none" stroke="#454b5b" stroke-width="3" stroke-linejoin="round"/></svg>
      <span>分享</span>
    </button>
    <button class="float-chat">
      <svg width="72" height="68" viewBox="0 0 72 68" aria-hidden="true"><path fill="none" stroke="url(#chat-fill)" stroke-width="5" d="M60 27C58 12 46 3 32 3C15 3 3 14 3 28C3 38 8 45 17 49L14 56L23 50L30 49"/><path fill="none" stroke="url(#chat-fill)" stroke-width="5" d="M51 30C60 30 67 36 67 44C67 49 65 53 61 56L62 62L55 58C44 60 35 54 35 45C35 36 42 30 51 30Z"/></svg>
      <span class="float-badge">交流群</span>
    </button>
  </aside>
</div>
</body>
</html>
```
FILE: styles.css
```css
* { box-sizing: border-box; }

body {
  margin: 0;
  background: #f7f8fa;
  color: #2f3032;
  font-family: "Noto Sans CJK SC", "Noto Sans", sans-serif;
}

h1, h2, p, ul, figure { margin: 0; padding: 0; }

button {
  padding: 0;
  border: 0;
  background: none;
  color: inherit;
  font: inherit;
}

svg { display: block; flex: none; }

.defs { position: absolute; }

.app {
  position: relative;
  display: flex;
  flex-direction: column;
  height: 100vh;
  overflow: hidden;
}

/* status bar */
.status {
  display: flex;
  justify-content: space-between;
  align-items: flex-start;
  height: 92px;
  padding: 30px 40px 0 38px;
}

.status-mini {
  fill: #666;
  font: 700 18px "Liberation Sans Narrow", "Roboto Condensed", Roboto, sans-serif;
  text-anchor: middle;
}

.status-badge { fill: #fff; font-size: 17px; }

.status-right {
  display: flex;
  align-items: center;
  gap: 10px;
  padding-top: 10px;
}

.clock {
  color: #707070;
  font: 400 34px/36px Roboto, sans-serif;
}

/* title bar */
.titlebar {
  display: grid;
  grid-template-columns: 1fr auto 1fr;
  align-items: center;
  height: 136px;
  padding: 0 24px;
}

.back { justify-self: start; margin-left: 20px; }

.page-title {
  padding-top: 6px;
  color: #000;
  font: 400 51px/72px Inter, "Noto Sans CJK SC", sans-serif;
}

.capsule {
  display: flex;
  justify-self: end;
  width: 290px;
  height: 96px;
  border: 2px solid #e4e4e6;
  border-radius: 48px;
  background: #fcfcfd;
}

.capsule-btn {
  display: flex;
  flex: 1;
  align-items: center;
  justify-content: center;
}

.capsule-more { padding-right: 4px; }

.capsule-close {
  position: relative;
  padding-left: 4px;
}

.capsule-close::before {
  content: "";
  position: absolute;
  left: 0;
  height: 58px;
  border-left: 2px solid #dcdcde;
}

/* search and follow switch */
.search {
  display: flex;
  align-items: center;
  gap: 17px;
  height: 114px;
  margin: 24px 45px 0;
  padding: 0 37px;
  border-radius: 20px;
  background: #fff;
}

.search input {
  flex: 1;
  min-width: 0;
  padding: 0;
  border: 0;
  outline: 0;
  background: none;
  font: 400 39px/60px "Noto Sans CJK SC", sans-serif;
}

.search input::placeholder { color: #b3b7bf; opacity: 1; }

.follow {
  display: flex;
  align-items: flex-start;
  justify-content: space-between;
  margin: 33px 45px 0;
  height: 64px;
}

.follow label { padding-top: 8px; font-size: 39px; line-height: 56px; }

.switch {
  appearance: none;
  width: 121px;
  height: 64px;
  margin: 0;
  border: 3px solid #c6c7c9;
  border-radius: 32px;
  background: #dcdee2;
}

.switch::before {
  content: "";
  display: block;
  width: 58px;
  height: 58px;
  border-radius: 50%;
  background: #fff;
  box-shadow: 0 6px 8px rgba(0, 0, 0, .3);
}

/* filter row */
.filters {
  display: grid;
  grid-template-columns: repeat(5, 1fr);
  height: 76px;
  margin-top: 56px;
}

.filters button {
  display: flex;
  align-items: center;
  justify-content: center;
  gap: 13px;
  height: 54px;
  padding-right: 8px;
  font-size: 39px;
  line-height: 54px;
}

.filters button::after {
  content: "";
  width: 26px;
  height: 15px;
  margin-top: 12px;
  background: #b3bfc7;
  clip-path: polygon(0 0, 100% 0, 56% 100%, 44% 100%);
}

/* results */
.results {
  position: relative;
  flex: 1;
  min-height: 0;
  overflow: hidden;
}

.list { padding: 16px 45px 0; list-style: none; }

.item {
  display: flex;
  gap: 27px;
  height: 292px;
  margin-bottom: 34px;
  border-bottom: 3px solid #edeef0;
}

.plan {
  position: relative;
  flex: none;
  width: 315px;
  height: 252px;
  background: #fff;
}

.plan svg { width: 100%; height: 100%; }

.plan figcaption {
  position: absolute;
  inset: auto 0 0;
  height: 45px;
  background: linear-gradient(rgba(0, 0, 0, .14), rgba(0, 0, 0, .5));
  color: #fff;
  font: 500 27px/46px Inter, "Noto Sans CJK SC", sans-serif;
  text-align: center;
}

.wall { fill: none; stroke: #121212; stroke-width: 11; }
.thin { stroke-width: 6; }
.window { fill: none; stroke: #5f656a; stroke-width: 3; }
.door { fill: none; stroke: #6b5c3c; stroke-width: 2; stroke-dasharray: 9 4; }
.ruler { fill: none; stroke: #777; stroke-width: 2; }
.dim, .dims-v text { fill: #222; font: 400 15px "Liberation Sans", sans-serif; text-anchor: middle; }
.room { fill: #33291c; font: 500 15px "Noto Sans CJK SC", sans-serif; text-anchor: middle; }

.info { flex: 1; min-width: 0; white-space: nowrap; }

.info h2 { font-size: 45px; font-weight: 700; line-height: 52px; }

.meta {
  display: flex;
  margin-top: 21px;
  color: #8d95a4;
  font-size: 33px;
  line-height: 40px;
}

.meta i { padding: 0 3px; font-style: normal; }

.price {
  display: flex;
  align-items: baseline;
  gap: 12px;
  margin-top: 18px;
  color: #17203a;
  font-size: 34px;
  line-height: 50px;
}

.price strong { color: #dc5a55; font-size: 42px; }

.cut {
  display: flex;
  align-items: center;
  gap: 16px;
  margin-top: 28px;
  padding-left: 3px;
  color: #5cb96f;
  font-size: 36px;
  font-weight: 700;
  line-height: 38px;
}

.watermark {
  position: absolute;
  inset: 0;
  width: 100%;
  height: 100%;
  opacity: .05;
  pointer-events: none;
}

.mark-strong { fill: #1f2d3d; font: 700 44px "Noto Sans CJK SC", sans-serif; }
.mark-light { fill: #1f2d3d; font: 500 36px "Noto Sans CJK SC", sans-serif; }

/* floating actions */
.floats {
  position: absolute;
  right: 46px;
  bottom: 262px;
  display: flex;
  flex-direction: column;
  align-items: center;
}

.float-card {
  display: flex;
  flex-direction: column;
  align-items: center;
  gap: 3px;
  width: 126px;
  height: 126px;
  margin-bottom: 27px;
  padding-top: 22px;
  border: 3px solid #dfe0e2;
  border-radius: 24px;
  background: #fff;
  box-shadow: 0 6px 24px rgba(0, 0, 0, .06);
  color: #454b5b;
  font-size: 29px;
  line-height: 40px;
}

.float-chat {
  position: relative;
  display: flex;
  align-items: center;
  justify-content: center;
  width: 145px;
  height: 145px;
  margin-top: 15px;
  border: 2px solid #e2e3e5;
  border-radius: 50%;
  background: #fff;
  box-shadow: 0 6px 16px rgba(0, 0, 0, .08);
}

.float-badge {
  position: absolute;
  top: -14px;
  right: -30px;
  width: 99px;
  height: 39px;
  border-radius: 20px 20px 20px 3px;
  background: linear-gradient(90deg, #ef4840, #c9605c);
  color: #fff;
  font-size: 27px;
  line-height: 36px;
  text-align: center;
}

/* system navigation */
.sysbar {
  position: relative;
  display: flex;
  justify-content: center;
  gap: 180px;
  height: 116px;
  padding-top: 33px;
  background: #f7f7f7;
}

.sysbar button { height: 50px; }
.sysbar button svg { fill: none; stroke: #868686; stroke-width: 4; }

.trace {
  position: absolute;
  right: 22px;
  bottom: 20px;
}
```
